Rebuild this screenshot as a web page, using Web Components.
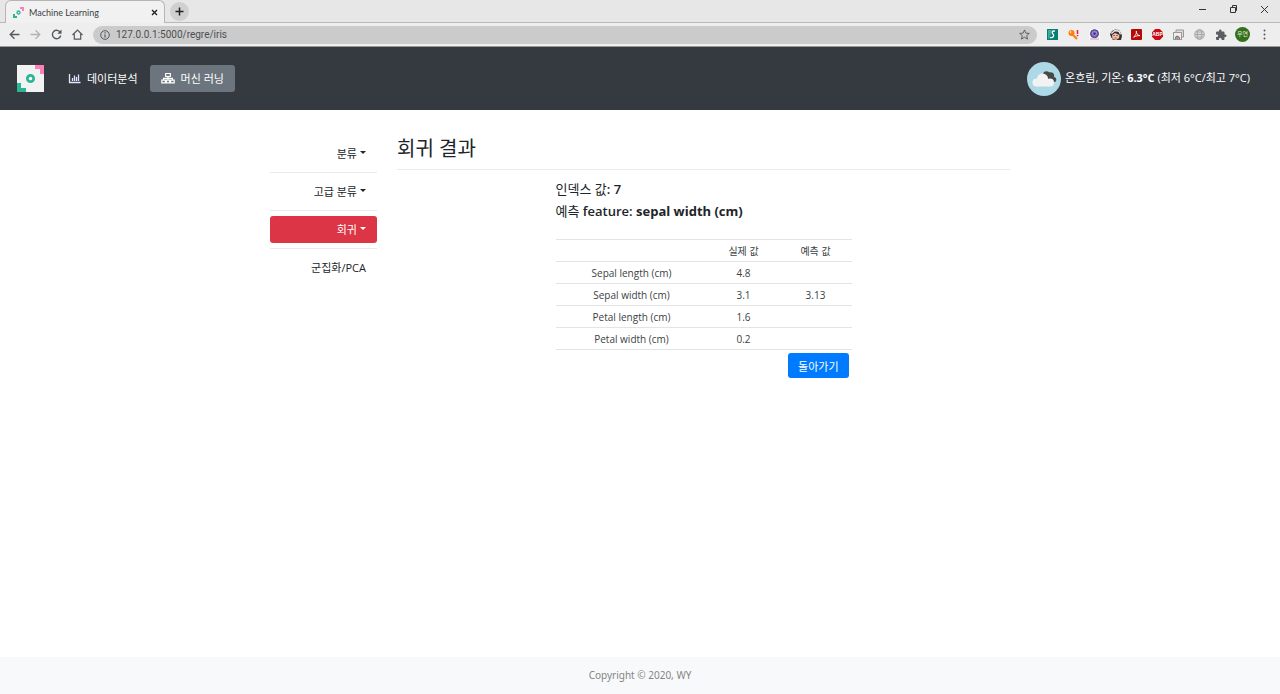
<!DOCTYPE html>
<html lang="ko">
<head>
<meta charset="utf-8">
<title>Machine Learning</title>
<style>
html, body { margin: 0; }
body { font-family: "Open Sans", "Noto Sans CJK KR", sans-serif; font-size: 11px; color: #212529; background: #fff; }
</style>
</head>
<body>
<ml-app></ml-app>
<script>
const define = (name, html) => customElements.define(name, class extends HTMLElement {
  constructor() {
    super();
    const t = document.createElement('template');
    t.innerHTML = html;
    this.attachShadow({ mode: 'open' }).append(t.content.cloneNode(true));
  }
});

define('ml-logo', `
<style>:host{display:block;flex:none} svg{display:block;width:100%;height:100%}</style>
<svg viewBox="0 0 27 27" aria-hidden="true">
<rect width="27" height="27" fill="#f1f3f2"/>
<path d="M18 0h9v9h-4V4h-5z" fill="#ff80b9"/>
<path d="M0 18h4v5h5v4H0z" fill="#2bb596"/>
<circle cx="13.500" cy="13.500" r="3.200" fill="none" stroke="#2bb596" stroke-width="2.700"/>
</svg>`);

define('browser-tabs', `
<style>
:host{display:flex;height:23px;background:#e7e7e7;border-bottom:1px solid #b8b8b8;box-sizing:border-box;align-items:stretch}
.tab{display:flex;align-items:center;box-sizing:border-box;width:160px;height:23px;margin-left:5px;padding:0 6px 0 7px;background:#f1f1f1;border:1px solid #b5b5b5;border-bottom:0;border-radius:6px 6px 0 0;font:9px Lato,sans-serif;color:#3c4043}
.tab svg.fav{width:11px;height:11px;margin-right:5px}
.tab span{flex:1}
button{display:grid;place-items:center;padding:0;border:0;background:none}
.x{width:7px;height:12px}
.new{width:19px;height:19px;margin:2px 0 0 5px;border-radius:50%;background:#d0d0d0}
.win{display:flex;gap:20px;margin-left:auto;padding-right:10px;align-items:center;height:19px}
.win button{width:11px;height:11px}
svg{display:block}
</style>
<div class="tab">
<svg class="fav" viewBox="0 0 11 11" aria-hidden="true"><path d="M7 0h4v4H9V2H7z" fill="#ff80b9"/><path d="M0 7h2v2h2v2H0z" fill="#2bb596"/><circle cx="5.500" cy="5.500" r="1.500" fill="none" stroke="#2bb596" stroke-width="1.300"/></svg>
<span>Machine Learning</span>
<button class="x" aria-label="Close tab"><svg width="7" height="7" viewBox="0 0 7 7"><path d="M1 1l5 5M6 1L1 6" stroke="#222" stroke-width="1.400"/></svg></button>
</div>
<button class="new" aria-label="New tab"><svg width="9" height="9" viewBox="0 0 9 9"><path d="M4.500 .5v8M.5 4.500h8" stroke="#222" stroke-width="1.500"/></svg></button>
<div class="win">
<button aria-label="Minimize"><svg width="9" height="9" viewBox="0 0 9 9"><path d="M1 4.500h7" stroke="#333"/></svg></button>
<button aria-label="Restore"><svg width="9" height="9" viewBox="0 0 9 9" fill="none" stroke="#333"><path d="M1.500 2.500h5v5h-5zM3.500 2V.5h4v5H7"/></svg></button>
<button aria-label="Close"><svg width="9" height="9" viewBox="0 0 9 9"><path d="M1 1l7 7M8 1L1 8" stroke="#333"/></svg></button>
</div>`);

define('browser-toolbar', `
<style>
:host{display:flex;align-items:center;box-sizing:border-box;height:24px;padding:0 9px 0 8px;background:#eee;border-bottom:1px solid #999}
button{display:grid;place-items:center;flex:none;width:13px;height:18px;padding:0;border:0;background:none;font-family:inherit}
svg{display:block}
.nav{display:flex;gap:8px}
.url{display:flex;align-items:center;flex:1;height:18px;border-radius:9px;background:#cbcbcb;margin:0 9px;padding:0 6px 0 7px;min-width:0}
input{flex:1;min-width:0;border:0;padding:0;margin:0 0 0 6px;background:none;font:10px Roboto,sans-serif;color:#4c4f52;outline:0}
.ext{display:flex;align-items:center;gap:8px}
.me{width:15px;height:15px;border-radius:50%;background:#34701c;color:#e2eddc;font-size:6px;line-height:15px}
</style>
<div class="nav">
<button aria-label="Back"><svg width="11" height="11" viewBox="0 0 11 11" fill="none" stroke="#55585c" stroke-width="1.300"><path d="M10.500 5.500H1.500M5.500 1.200L1.200 5.500l4.300 4.300"/></svg></button>
<button aria-label="Forward"><svg width="11" height="11" viewBox="0 0 11 11" fill="none" stroke="#b0b2b4" stroke-width="1.300"><path d="M.5 5.500h9M5.500 1.200l4.300 4.300-4.300 4.300"/></svg></button>
<button aria-label="Reload"><svg width="11" height="11" viewBox="0 0 11 11" fill="none" stroke="#55585c" stroke-width="1.400"><path d="M9.300 3.500A4.200 4.200 0 1 0 9.700 6.500"/><path d="M10.500.5v4.200H6.300z" fill="#55585c" stroke="none"/></svg></button>
<button aria-label="Home"><svg width="11" height="11" viewBox="0 0 11 11" fill="none" stroke="#55585c" stroke-width="1.200"><path d="M.5 6L5.500 1l5 5M2.300 5v5.200h6.400V5"/></svg></button>
</div>
<div class="url">
<svg width="10" height="10" viewBox="0 0 10 10" fill="none" stroke="#55585c"><circle cx="5" cy="5" r="4.300"/><path d="M5 4.500v3M5 2.300v1.200" stroke-width="1.200"/></svg>
<input aria-label="Address" value="127.0.0.1:5000/regre/iris">
<button aria-label="Bookmark"><svg width="11" height="11" viewBox="0 0 24 24" fill="none" stroke="#55585c" stroke-width="2"><path d="M12 2l3 7 7.500.6-5.700 5 1.800 7.400L12 18l-6.600 4 1.800-7.400-5.700-5L9 9z"/></svg></button>
</div>
<div class="ext">
<button aria-label="Stylish"><svg width="11" height="11" viewBox="0 0 11 11"><path d="M0 0h11v11H0z" fill="#087d73"/><path d="M1 1h4L2 10H1z" fill="#3daa9c"/><path d="M8 2.200c-3-.8-3.500 1.300-2 2.800 1.500 1.800.5 4-3 3.500" stroke="#fff" stroke-width="1.300" fill="none"/></svg></button>
<button aria-label="Key"><svg width="11" height="11" viewBox="0 0 11 11"><circle cx="3.500" cy="4" r="3" fill="#ff7f0a"/><path d="M4 5l5 5" stroke="#ff7f0a" stroke-width="2"/><circle cx="2.600" cy="3" r=".8" fill="#fff"/><path d="M9.500 1v4M9.500 6v1.300" stroke="#ee1742" stroke-width="1.500"/></svg></button>
<button aria-label="Shield"><svg width="11" height="11" viewBox="0 0 11 11"><path d="M0 0h11v11H0z" fill="#f8f8fb"/><circle cx="5.500" cy="4.700" r="4" fill="#7965b4" stroke="#4d388f"/><path d="M3.700 3h3.600v2L5.500 7 3.700 5z" fill="#41307c" stroke="#c5bce2" stroke-width=".7"/><path d="M1 10h9" stroke="#d98fae"/></svg></button>
<button aria-label="Character"><svg width="12" height="12" viewBox="0 0 12 12"><path d="M0 5l2-3 3-1.500L9 1l2 3 1 3-1 4H8L3 11 1 8z" fill="#373031"/><path d="M1.300 4.500L5 1.500l4 .7 1.500 3" stroke="#f2eeee" stroke-width="1.400" fill="none"/><path d="M2 6l3-2 4.500 2-.5 3-3 2-3.500-1z" fill="#f5bba4"/><path d="M3.500 6.500h1M6.500 6.500h1" stroke="#222"/><path d="M4.500 9h2" stroke="#cc3838"/></svg></button>
<button aria-label="PDF"><svg width="11" height="11" viewBox="0 0 11 11"><rect width="11" height="11" rx="1" fill="#b50b08"/><path d="M5.300 2c1 2-1.500 5-3 6.500M5.300 2c-.7 2 1.700 4.500 3.700 4.600-2 0-4.500.3-6 1.500" stroke="#fff" fill="none" stroke-width=".9"/></svg></button>
<button aria-label="Ad blocker"><svg width="11" height="11" viewBox="0 0 11 11"><path d="M3.200 0h4.600L11 3.200v4.600L7.800 11H3.200L0 7.800V3.200z" fill="#c70d12"/><text x="5.500" y="7.200" text-anchor="middle" font-family="Liberation Sans" font-weight="700" font-size="5" fill="#fff">ABP</text></svg></button>
<button aria-label="Screen"><svg width="11" height="11" viewBox="0 0 11 11"><path d="M3 3V1h7.500v7H9" fill="#ddd" stroke="#999"/><rect x=".5" y="3.500" width="8" height="7" fill="#eee" stroke="#999"/><path d="M2.500 10a2.300 2.300 0 0 1 2-2.500" stroke="#37a852" stroke-width="1.300" fill="none"/><path d="M3.500 7.500a2.500 2.500 0 0 1 3 2.500" stroke="#e44b3c" stroke-width="1.300" fill="none"/><circle cx="4.500" cy="9.500" r="1" fill="#4c87e8"/></svg></button>
<button aria-label="Globe"><svg width="11" height="11" viewBox="0 0 11 11" fill="#ddd" stroke="#a6a6a6"><circle cx="5.500" cy="5.500" r="4.800"/><ellipse cx="5.500" cy="5.500" rx="2.200" ry="4.800" fill="none"/><path d="M.7 5.500h9.600M1.500 3h8M1.500 8h8"/></svg></button>
<button aria-label="Extensions"><svg width="12" height="12" viewBox="0 0 24 24" fill="#5b5e63"><path d="M20.500 11H19V7a2 2 0 0 0-2-2h-4V3.500a2.500 2.500 0 0 0-5 0V5H4a2 2 0 0 0-2 2v3.800h1.500a2.700 2.700 0 0 1 0 5.400H2V20a2 2 0 0 0 2 2h3.800v-1.500a2.700 2.700 0 0 1 5.400 0V22H17a2 2 0 0 0 2-2v-4h1.500a2.500 2.500 0 0 0 0-5z"/></svg></button>
<button class="me" aria-label="Profile">우연</button>
<button aria-label="Menu"><svg width="3" height="11" viewBox="0 0 3 11" fill="#55585c"><circle cx="1.500" cy="1.500" r="1"/><circle cx="1.500" cy="5.500" r="1"/><circle cx="1.500" cy="9.500" r="1"/></svg></button>
</div>`);

define('site-nav', `
<style>
:host{display:flex;align-items:center;box-sizing:border-box;height:63px;padding:0 30px 0 17px;background:#343a40;color:#fff}
ml-logo{width:27px;height:27px;margin-right:13px}
nav{display:flex;gap:1px}
a{display:flex;align-items:center;box-sizing:border-box;height:27px;padding:0 11px 2px;border-radius:3px;color:#fff;text-decoration:none}
a.on{background:#6c757d}
a svg{margin-right:6px}
.weather{display:flex;align-items:center;gap:4px;margin-left:auto}
.weather p{margin:0 0 4px;white-space:nowrap}
</style>
<ml-logo></ml-logo>
<nav>
<a href="#data"><svg width="13" height="12" viewBox="0 0 13 12" fill="none" stroke="#e3e2ff" stroke-width="1.300"><path d="M1.500 2v8.500H12.500M4.500 9V6M6.500 9V3.500M8.500 9V5M10.500 9V2.500"/></svg>데이터분석</a>
<a class="on" href="#ml"><svg width="14" height="12" viewBox="0 0 14 12" fill="none" stroke="#fff" stroke-width="1.200"><path d="M4.700 1.500h4.600v3H4.700zM.8 8.200h3.600v2.600H.8zM9.600 8.200h3.600v2.600H9.600zM5.400 8.200h3.200v2.600H5.400zM7 4.500v3.700M2.600 8V6.300h8.800V8"/></svg>머신 러닝</a>
</nav>
<div class="weather">
<svg width="34" height="34" viewBox="0 0 34 34" aria-hidden="true"><circle cx="17" cy="17" r="17" fill="#add8e6"/><g fill="#484848"><circle cx="19.500" cy="12.500" r="3.300"/><circle cx="23.500" cy="14" r="3.700"/><circle cx="26.700" cy="17.500" r="2.600"/><path d="M18 12h5l5 8h-6z"/></g><g fill="#f2f2f2"><circle cx="9.500" cy="20.500" r="4"/><circle cx="15.500" cy="17" r="5.600"/><circle cx="23" cy="20.500" r="4"/><rect x="8" y="18" width="16" height="6.500" rx="2"/></g></svg>
<p>온흐림, 기온: <b>6.3°C</b> (최저 6°C/최고 7°C)</p>
</div>`);

define('side-item', `
<style>
:host{display:block;padding:5px 0;border-bottom:1px solid #e9eaeb}
:host(:last-child){border-bottom:0}
a{display:flex;align-items:center;justify-content:flex-end;gap:3px;box-sizing:border-box;height:27px;padding:0 11px 2px;border-radius:3px;color:#212529;text-decoration:none}
:host([active]) a{background:#dc3545;color:#fff}
i{border:3px solid transparent;border-top-color:currentColor;border-bottom:0}
:host([plain]) i{display:none}
:host([plain]) a{gap:0}
</style>
<a href="#menu"><slot></slot><i></i></a>`);

define('side-menu', `
<style>:host{display:block;width:107px;flex:none}</style>
<side-item>분류</side-item><side-item>고급 분류</side-item><side-item active>회귀</side-item><side-item plain>군집화/PCA</side-item>`);

define('result-table', `
<style>
:host{display:block}
table{width:100%;border-collapse:collapse;table-layout:fixed;border-bottom:1px solid #e2e4e6;color:#3b3f43;font-size:10px}
.name{width:152px}
th,td{box-sizing:border-box;height:22px;padding:0;border-top:1px solid #e2e4e6;font-weight:400;text-align:center;line-height:16px}
</style>
<table>
<colgroup><col class="name"><col><col></colgroup>
<thead><tr><td></td><th scope="col">실제 값</th><th scope="col">예측 값</th></tr></thead>
<tbody>
<tr><th scope="row">Sepal length (cm)</th><td>4.8</td><td></td></tr>
<tr><th scope="row">Sepal width (cm)</th><td>3.1</td><td>3.13</td></tr>
<tr><th scope="row">Petal length (cm)</th><td>1.6</td><td></td></tr>
<tr><th scope="row">Petal width (cm)</th><td>0.2</td><td></td></tr>
</tbody></table>`);

define('result-panel', `
<style>
:host{display:block;flex:1;min-width:0}
h1{margin:0;padding-bottom:6px;border-bottom:1px solid #e9eaeb;font-size:20px;line-height:28px;font-weight:400}
.body{width:296px;max-width:100%;margin:8px auto 0}
p{margin:0;font-size:13px;line-height:22px}
span{font-weight:600}
result-table{margin-top:17px}
.actions{display:flex;justify-content:flex-end;padding:3px 3px 0 0}
button{height:25px;padding:0 10px;border:0;border-radius:3px;background:#007bff;color:#fff;font:11px "Open Sans","Noto Sans CJK KR",sans-serif}
</style>
<h1>회귀 결과</h1>
<div class="body">
<p>인덱스 값<span>: 7</span></p>
<p>예측 <span>feature:</span> <b>sepal width (cm)</b></p>
<result-table></result-table>
<div class="actions"><button type="button">돌아가기</button></div>
</div>`);

define('site-footer', `
<style>:host{display:block;padding:10px 0;background:#f8f9fa;color:#858585;text-align:center;font-family:"Noto Sans",sans-serif;font-size:10px;line-height:17px}</style>
Copyright © 2020, WY`);

define('ml-app', `
<style>
:host{display:flex;flex-direction:column;min-height:100vh}
main{display:flex;gap:20px;flex:1;box-sizing:border-box;width:100%;max-width:740px;margin:0 auto;padding-top:25px}
</style>
<header><browser-tabs></browser-tabs><browser-toolbar></browser-toolbar></header>
<site-nav></site-nav>
<main><side-menu></side-menu><result-panel></result-panel></main>
<site-footer></site-footer>`);
</script>
</body>
</html>
